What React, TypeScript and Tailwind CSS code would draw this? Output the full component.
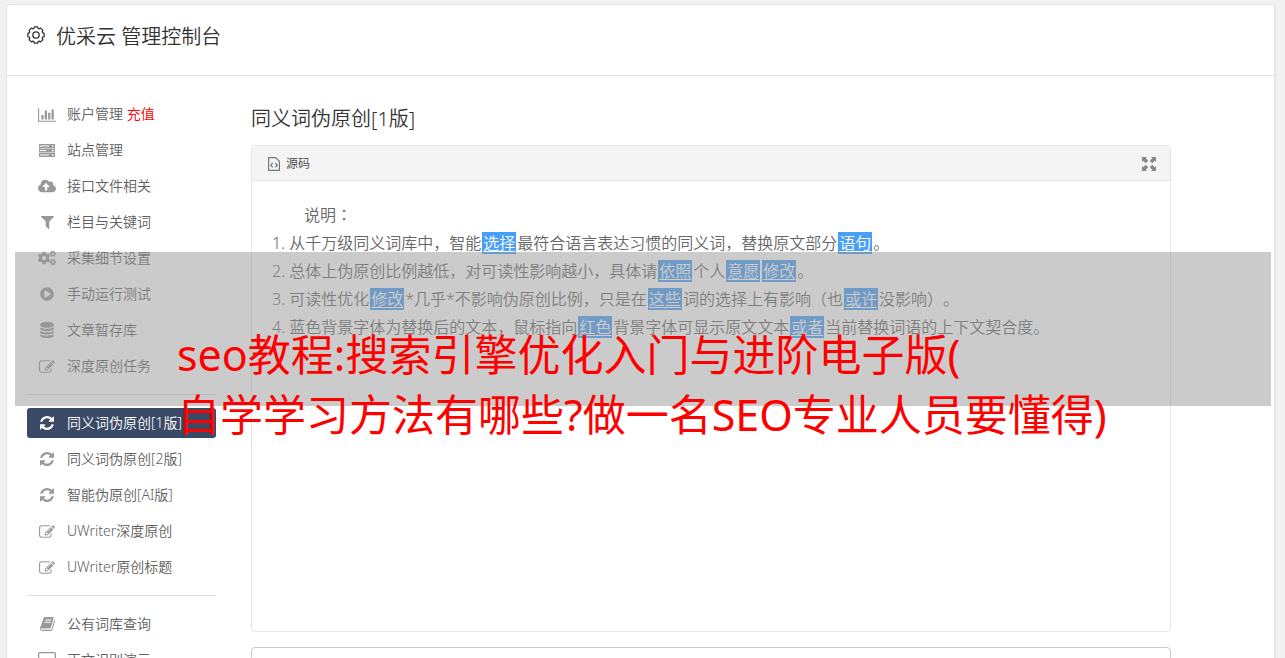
import React from "react";
import { FaCloudUploadAlt, FaCogs, FaPlayCircle } from "react-icons/fa";

type IconProps = { className?: string };

const shape = (viewBox: string, d: string) =>
  function Icon({ className }: IconProps) {
    return (
      <svg viewBox={viewBox} className={className} fill="currentColor" aria-hidden="true">
        <path fillRule="evenodd" d={d} />
      </svg>
    );
  };

const BarChart = shape(
  "0 0 2048 1664",
  "M640 896v512h-256v-512h256zM1024 384v1024h-256v-1024h256zM2048 1536v128h-2048v-1536h128v1408h1920zM1408 640v768h-256v-768h256zM1792 256v1152h-256v-1152h256z"
);
const Server = shape(
  "0 0 16 13",
  "M0 0h16v4H0zM1 1.400v1.200h9V1.400zM13 1.300v1.400h1.500V1.300zM0 4.500h16v4H0zM1 5.900v1.200h6V5.900zM13 5.800v1.400h1.500V5.800zM0 9h16v4H0zM1 10.400v1.200h9v-1.200zM13 10.300v1.400h1.500v-1.400z"
);
const Filter = shape(
  "0 0 1408 1408",
  "M1403 39q17 41-14 70l-493 493v742q0 42-39 59-13 5-25 5-27 0-45-19l-256-256q-19-19-19-45v-486l-493-493q-31-29-14-70 17-39 59-39h1280q42 0 59 39z"
);
const Database = shape(
  "0 0 1536 1792",
  "M768 768q237 0 443-43t325-127v170q0 69-103 128t-280 93.500-385 34.500-385-34.500-280-93.500-103-128v-170q119 84 325 127t443 43zM768 1536q237 0 443-43t325-127v170q0 69-103 128t-280 93.500-385 34.500-385-34.500-280-93.500-103-128v-170q119 84 325 127t443 43zM768 1152q237 0 443-43t325-127v170q0 69-103 128t-280 93.500-385 34.500-385-34.500-280-93.500-103-128v-170q119 84 325 127t443 43zM768 0q208 0 385 34.500t280 93.500 103 128v128q0 69-103 128t-280 93.500-385 34.500-385-34.500-280-93.500-103-128v-128q0-69 103-128t280-93.500 385-34.500z"
);
const Edit = shape(
  "0 128 1792 1408",
  "M888 1184l116-116-152-152-116 116v56h96v96h56zM1328 464q-16-16-33 1l-350 350q-17 17-1 33t33-1l350-350q17-17 1-33zM1408 1058v190q0 119-84.500 203.500t-203.500 84.500h-832q-119 0-203.500-84.500t-84.500-203.500v-832q0-119 84.500-203.500t203.500-84.500h832q63 0 117 25 15 7 18 23 3 17-9 29l-49 49q-14 14-32 8-23-6-45-6h-832q-66 0-113 47t-47 113v832q0 66 47 113t113 47h832q66 0 113-47t47-113v-126q0-13 9-22l64-64q15-15 35-7t20 29zM1312 320l288 288-672 672h-288v-288zM1756 452l-92 92-288-288 92-92q28-28 68-28t68 28l152 152q28 28 28 68t-28 68z"
);
const Refresh = shape(
  "0 0 1536 1536",
  "M1511 928q0 5-1 7-64 268-268 434.500t-478 166.500q-146 0-282.500-55t-243.500-157l-129 129q-19 19-45 19t-45-19-19-45v-448q0-26 19-45t45-19h448q26 0 45 19t19 45-19 45l-137 137q71 66 161 102t187 36q134 0 250-65t186-179q11-17 53-117 8-23 30-23h192q13 0 22.500 9.500t9.500 22.500zM1536 128v448q0 26-19 45t-45 19h-448q-26 0-45-19t-19-45 19-45l138-138q-148-137-349-137-134 0-250 65t-186 179q-11 17-53 117-8 23-30 23h-199q-13 0-22.500-9.500t-9.500-22.500v-7q65-268 270-434.500t480-166.500q146 0 284 55.500t245 156.500l130-129q19-19 45-19t45 19 19 45z"
);
const Book = shape(
  "0 128 1664 1536",
  "M1639 478q40 57 18 129l-275 906q-19 64-76.500 107.500t-122.500 43.500h-923q-77 0-148.500-53.500t-99.500-131.500q-24-67-2-127 0-4 3-27t4-37q1-8-3-21.500t-3-19.500q2-11 8-21t16.500-23.500 16.500-23.500q23-38 45-91.500t30-91.500q3-10 .5-30t-.5-28q3-11 17-28t17-23q21-36 42-92t25-90q1-9-2.500-32t.5-28q4-13 22-30.500t22-22.500q19-26 42.500-84.500t27.500-96.500q1-8-3-25.500t-2-26.500q2-8 9-18t18-23 17-21q8-12 16.500-30.500t15-35 16-36 19.500-32 26.500-23.500 36-11.500 47.500 5.500l-1 3q38-9 51-9h761q74 0 114 56t18 130l-274 906q-36 119-71.500 153.500t-128.500 34.500h-869q-27 0-38 15-11 16-1 43 24 70 144 70h923q29 0 56-15.500t35-41.500l300-987q7-22 5-57 38 15 59 43zM575 480q-4 13 2 22.500t20 9.500h608q13 0 25.500-9.500t16.500-22.500l21-64q4-13-2-22.500t-20-9.500h-608q-13 0-25.500 9.500t-16.500 22.500zM492 736q-4 13 2 22.500t20 9.500h608q13 0 25.500-9.500t16.500-22.500l21-64q4-13-2-22.500t-20-9.500h-608q-13 0-25.500 9.500t-16.500 22.500z"
);
const Monitor = shape(
  "0 0 18 16",
  "M1.500 0h15Q18 0 18 1.500v10q0 1.500-1.500 1.500H11v2h2v1H5v-1h2v-2H1.500Q0 13 0 11.500v-10Q0 0 1.500 0zM1.300 1.300v9.200h15.400V1.300z"
);
const Expand = shape(
  "0 0 14 14",
  "M0 0h5L3.700 1.300 6.200 3.800 3.800 6.200 1.300 3.700 0 5zM14 0v5l-1.300-1.300-2.500 2.500-2.400-2.400 2.500-2.500L9 0zM14 14H9l1.300-1.300-2.500-2.500 2.400-2.400 2.500 2.500L14 9zM0 14V9l1.300 1.300 2.500-2.500 2.400 2.400-2.500 2.500L5 14z"
);

function GearOutline() {
  const lobes = 8;
  let d = "";
  for (let i = 0; i < lobes; i++) {
    const at = (r: number, t: number) => {
      const a = ((i + t) / lobes) * Math.PI * 2 - Math.PI / 2;
      return `${(9 + r * Math.cos(a)).toFixed(2)} ${(9 + r * Math.sin(a)).toFixed(2)}`;
    };
    if (i === 0) d += `M${at(8.3, -0.25)}`;
    d += `L${at(8.3, 0.25)}Q${at(5.6, 0.5)} ${at(8.3, 0.75)}`;
  }
  return (
    <svg viewBox="0 0 18 18" className="size-[18px]" fill="none" stroke="currentColor" aria-hidden="true">
      <path d={d + "Z"} strokeWidth="1.300" strokeLinejoin="round" />
      <circle cx="9" cy="9" r="3.200" strokeWidth="1.300" />
    </svg>
  );
}

function SourceFile() {
  return (
    <svg viewBox="0 0 12 14" className="h-3.5 w-3" fill="none" stroke="#777" aria-hidden="true">
      <path d="M.6.6h7l3.800 3.600v9.200H.6z" strokeWidth="1.200" />
      <path d="M4.700 6L2.700 8.200l2 2.200M7.300 6l2 2.200-2 2.200" strokeWidth="1.200" />
    </svg>
  );
}

type Item = { label: string; extra?: string; icon: React.ComponentType<IconProps>; size: string; active?: boolean };

const groups: Item[][] = [
  [
    { label: "账户管理", extra: "充值", icon: BarChart, size: "w-[18px] h-[15px]" },
    { label: "站点管理", icon: Server, size: "w-4 h-[13px]" },
    { label: "接口文件相关", icon: FaCloudUploadAlt, size: "size-[18px]" },
    { label: "栏目与关键词", icon: Filter, size: "size-[13px]" },
    { label: "采集细节设置", icon: FaCogs, size: "size-[18px]" },
    { label: "手动运行测试", icon: FaPlayCircle, size: "size-[14px]" },
    { label: "文章暂存库", icon: Database, size: "w-[14px] h-4" },
    { label: "深度原创任务", icon: Edit, size: "w-4 h-[13px]" },
  ],
  [
    { label: "同义词伪原创[1版]", icon: Refresh, size: "size-[14px]", active: true },
    { label: "同义词伪原创[2版]", icon: Refresh, size: "size-[14px]" },
    { label: "智能伪原创[AI版]", icon: Refresh, size: "size-[14px]" },
    { label: "UWriter深度原创", icon: Edit, size: "w-4 h-[13px]" },
    { label: "UWriter原创标题", icon: Edit, size: "w-4 h-[13px]" },
  ],
  [
    { label: "公有词库查询", icon: Book, size: "w-[15px] h-[14px]" },
    { label: "正文识别演示", icon: Monitor, size: "w-[18px] h-4" },
  ],
];

function NavItem({ item }: { item: Item }) {
  const Icon = item.icon;
  return (
    <a
      href="#"
      aria-current={item.active ? "page" : undefined}
      className={
        "flex h-[30px] items-center gap-2.5 rounded-[3px] pl-2.5 text-sm whitespace-nowrap " +
        (item.active ? "bg-[#3a4a66] text-white" : "text-[#606060]")
      }
    >
      <span className={"flex w-5 justify-center " + (item.active ? "text-white" : "text-[#999]")}>
        <Icon className={item.size} />
      </span>
      <span>
        {item.label}
        {item.extra && <span className="text-[#f00]"> {item.extra}</span>}
      </span>
    </a>
  );
}

function W({ children }: { children: string }) {
  return <span className="mx-px bg-[#499ff5] px-px text-white underline underline-offset-2">{children}</span>;
}

function Mark({ children }: { children: string }) {
  return <span className="font-['Noto_Sans_CJK_TC',sans-serif] leading-none" lang="zh-TW">{children}</span>;
}

export default function App() {
  return (
    <div className="relative h-screen overflow-hidden bg-[#f1f1f1] pt-1 pr-[9px] pl-1.5 font-['Noto_Sans','Noto_Sans_CJK_SC',sans-serif] font-[350] [text-spacing-trim:space-all]">
      <div className="min-h-full rounded-t-[4px] border border-r-2 border-[#e5e5e5] bg-white">
        <header className="flex h-[71px] items-start gap-[11px] border-b border-[#e5e5e5] pt-4 pl-5 text-[#333]">
          <span className="flex h-7 items-center">
            <GearOutline />
          </span>
          <h1 className="text-xl leading-8">优采云 管理控制台</h1>
        </header>
        <div className="flex pt-[23px] pl-5">
          <nav className="w-[189px] shrink-0">
            {groups.map((group, i) => (
              <React.Fragment key={i}>
                {i > 0 && <hr className="my-[13px] border-[#ddd]" />}
                <ul className="flex flex-col gap-1.5">
                  {group.map((item) => (
                    <li key={item.label}>
                      <NavItem item={item} />
                    </li>
                  ))}
                </ul>
              </React.Fragment>
            ))}
          </nav>
          <main className="mr-[103px] ml-[35px] min-w-0 flex-1">
            <h2 className="pt-1 text-xl leading-8 text-[#333]">同义词伪原创[1版]</h2>
            <section className="mt-2.5 min-h-[487px] rounded-[4px] border border-[#e5e5e5]">
              <div className="flex h-[35px] items-center justify-between rounded-t-[3px] border-b border-[#e5e5e5] bg-[#f4f4f4] pt-0.5 pr-3.5 pl-4">
                <button type="button" className="flex items-center gap-1.5 text-xs text-[#444]">
                  <SourceFile />
                  源码
                </button>
                <button type="button" aria-label="全屏" className="text-[#888]">
                  <Expand className="size-[14px]" />
                </button>
              </div>
              <div className="px-5 pt-5 text-base leading-7 text-[#666]">
                <p className="indent-8">
                  说明<Mark>：</Mark>
                </p>
                <p>
                  1. 从千万级同义词库中，智能<W>选择</W>最符合语言表达习惯的同义词，替换原文部分<W>语句</W>。
                </p>
                <p>
                  2. 总体上伪原创比例越低，对可读性影响越小，具体请<W>依照</W>个人<W>意愿</W>
                  <W>修改</W>。
                </p>
                <p>
                  3. 可读性优化<W>修改</W>*几乎*不影响伪原创比例，只是在<W>这些</W>词的选择上有影响<Mark>（</Mark>也<W>或许</W>没影响<Mark>）</Mark>。
                </p>
                <p>
                  4. 蓝色背景字体为替换后的文本，鼠标指向<W>红色</W>背景字体可显示原文文本<W>或者</W>当前替换词语的上下文契合度。
                </p>
              </div>
            </section>
            <textarea aria-label="原文" className="mt-[15px] block h-40 w-full resize-none rounded-[4px] border border-[#ccc] bg-white" />
          </main>
        </div>
      </div>
      <div className="absolute top-[252px] right-3.5 left-[15px] h-[154px] bg-[#979797]/50 pt-[73px] pl-[162px]">
        <p className="text-[43px] leading-[60px] font-normal whitespace-nowrap text-[#f00]">
          seo教程:搜索引擎优化入门与进阶电子版(
          <br />
          自学学习方法有哪些?做一名SEO专业人员要懂得)
        </p>
      </div>
    </div>
  );
}
